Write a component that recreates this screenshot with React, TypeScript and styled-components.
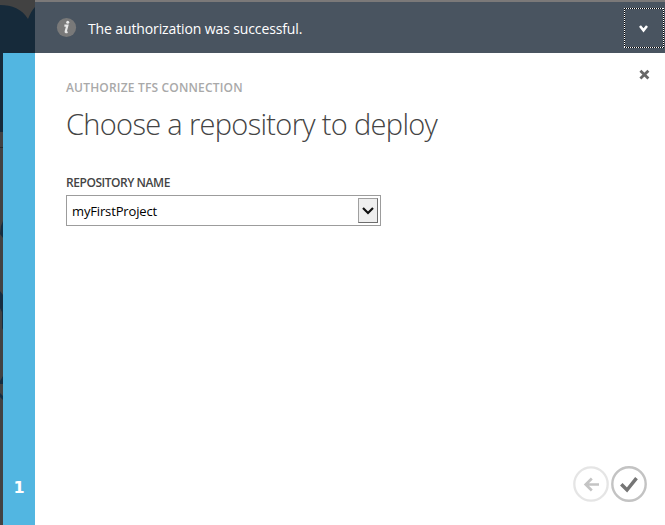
import React from "react";
import styled, { createGlobalStyle } from "styled-components";

const GlobalStyle = createGlobalStyle`
  * { box-sizing: border-box; }
  body { margin: 0; font-family: "Open Sans", "Noto Sans", sans-serif; background: #fff; }
`;

const Page = styled.div`
  display: flex;
  width: 665px;
  height: 525px;
  overflow: hidden;
`;

const SideColumn = styled.aside`
  position: relative;
  width: 35px;
  padding: 53px 0 0 3px;
  background: #424242;
`;

const Backdrop = styled.svg`
  position: absolute;
  inset: 0;
`;

const StepRail = styled.div`
  position: relative;
  display: flex;
  align-items: flex-end;
  justify-content: center;
  height: 472px;
  padding-bottom: 25px;
  background: #52b6e1;
`;

const StepNumber = styled.span`
  color: #fff;
  font: 700 16px/24px "DejaVu Sans", sans-serif;
`;

const Main = styled.main`
  display: flex;
  flex-direction: column;
  width: 630px;
`;

const NoticeBar = styled.header`
  display: flex;
  align-items: center;
  height: 53px;
  padding: 0 1px 0 21px;
  border-top: 2px solid #7b7979;
  background: #495460;
`;

const NoticeText = styled.span`
  flex: 1;
  margin: 2px 0 0 11px;
  color: #fff;
  font-size: 14px;
  line-height: 20px;
  letter-spacing: -0.12px;
`;

const IconButton = styled.button`
  display: flex;
  padding: 0;
  border: 0;
  background: none;
`;

const CollapseButton = styled(IconButton)`
  margin-top: 1px;
`;

const Panel = styled.section`
  display: flex;
  flex: 1;
  flex-direction: column;
  align-items: flex-start;
  padding: 16px 15px 22px 31px;
  background: #fff;
`;

const CloseButton = styled(IconButton)`
  align-self: flex-end;
`;

const Eyebrow = styled.div`
  margin-top: -1px;
  color: #a9a9a9;
  font-size: 12px;
  font-weight: 600;
  line-height: 16px;
  letter-spacing: 0.18px;
  white-space: nowrap;
`;

const Title = styled.h1`
  margin: 8px 0 0;
  color: #444;
  font-size: 29px;
  font-weight: 300;
  line-height: 40px;
  letter-spacing: -0.68px;
  white-space: nowrap;
`;

const FieldLabel = styled.label`
  margin-top: 31px;
  color: #444;
  font-size: 12px;
  font-weight: 600;
  line-height: 16px;
  letter-spacing: -0.45px;
  white-space: nowrap;
`;

const SelectBox = styled.div`
  display: flex;
  align-items: center;
  width: 315px;
  height: 31px;
  margin-top: 4px;
  padding: 0 2px 0 5px;
  border: 1px solid #9c9c9c;
`;

const SelectValue = styled.span`
  flex: 1;
  color: #000;
  font-size: 13px;
  line-height: 18px;
  letter-spacing: -0.15px;
`;

const DropButton = styled.span`
  display: flex;
  align-items: center;
  justify-content: center;
  width: 20px;
  height: 25px;
  border: 1px solid #6d6d6d;
  border-top-color: #a0a0a0;
  border-left-color: #a0a0a0;
  background: #efefef;
`;

const WizardActions = styled.footer`
  display: flex;
  align-self: flex-end;
  gap: 2px;
  margin-top: auto;
  margin-right: 3px;
`;

export default function App() {
  return (
    <>
      <GlobalStyle />
      <Page>
        <SideColumn>
          <Backdrop width="35" height="525">
            <path d="M0 5C12 5 22 9 28 19C30 14 32 10 35 7V132H0Z" fill="#162a3a" />
            <path d="M0 147.5H3" stroke="#292929" />
            <path d="M3 221L1 226L0 234L3 238ZM0 291L3 295V330L2 328V312L0 308ZM3 376L0 381V384H3ZM0 393L3 396V400L0 397Z" fill="#162d40" />
          </Backdrop>
          <StepRail>
            <StepNumber>1</StepNumber>
          </StepRail>
        </SideColumn>
        <Main>
          <NoticeBar>
            <svg width="21" height="21" viewBox="0 0 21 21">
              <circle cx="10.5" cy="10.5" r="9.6" fill="#797979" />
              <circle cx="11.7" cy="5.3" r="1.5" fill="#e8e8e8" />
              <path d="M8.4 8.7H11.3L9.7 14.4Q9.4 15.7 11.5 14.9" fill="none" stroke="#e8e8e8" strokeWidth="2.2" />
            </svg>
            <NoticeText>The authorization was successful.</NoticeText>
            <CollapseButton aria-label="Collapse">
              <svg width="40" height="40" viewBox="0 0 40 40">
                <path d="M.5 .5H39.5V39.5H.5Z" fill="none" stroke="#000" shapeRendering="crispEdges" />
                <path d="M0 .5H40M0 39.5H40M.5 0V40M39.5 0V40" fill="none" stroke="#fff" strokeDasharray="1 1" shapeRendering="crispEdges" />
                <path d="M16 18L19.5 22.4L23 18" fill="none" stroke="#fff" strokeWidth="2.5" />
              </svg>
            </CollapseButton>
          </NoticeBar>
          <Panel>
            <CloseButton aria-label="Close">
              <svg width="12" height="12" viewBox="0 0 12 12">
                <path d="M2.4 1.7L10.4 9.5M10.4 1.7L2.4 9.5" stroke="#666" strokeWidth="2.8" />
              </svg>
            </CloseButton>
            <Eyebrow>AUTHORIZE TFS CONNECTION</Eyebrow>
            <Title>Choose a repository to deploy</Title>
            <FieldLabel>REPOSITORY NAME</FieldLabel>
            <SelectBox role="combobox">
              <SelectValue>myFirstProject</SelectValue>
              <DropButton>
                <svg width="12" height="9" viewBox="0 0 12 9">
                  <path d="M1 2L6 7L11 2" fill="none" stroke="#111" strokeWidth="2.2" />
                </svg>
              </DropButton>
            </SelectBox>
            <WizardActions>
              <IconButton aria-label="Back">
                <svg width="36" height="37" viewBox="0 0 36 37">
                  <circle cx="18" cy="18" r="16.7" fill="none" stroke="#e5e5e5" strokeWidth="2.3" />
                  <path d="M26 18.5H13M18.8 12.5L12.7 18.5L18.8 24.5" fill="none" stroke="#c4c4c4" strokeWidth="2.7" />
                </svg>
              </IconButton>
              <IconButton aria-label="Complete">
                <svg width="36" height="37" viewBox="0 0 36 37">
                  <circle cx="18" cy="18" r="16.7" fill="none" stroke="#c3c3c3" strokeWidth="2.4" />
                  <path d="M10.3 18.3L16 24L25.5 12.2" fill="none" stroke="#757575" strokeWidth="3.5" />
                </svg>
              </IconButton>
            </WizardActions>
          </Panel>
        </Main>
      </Page>
    </>
  );
}
